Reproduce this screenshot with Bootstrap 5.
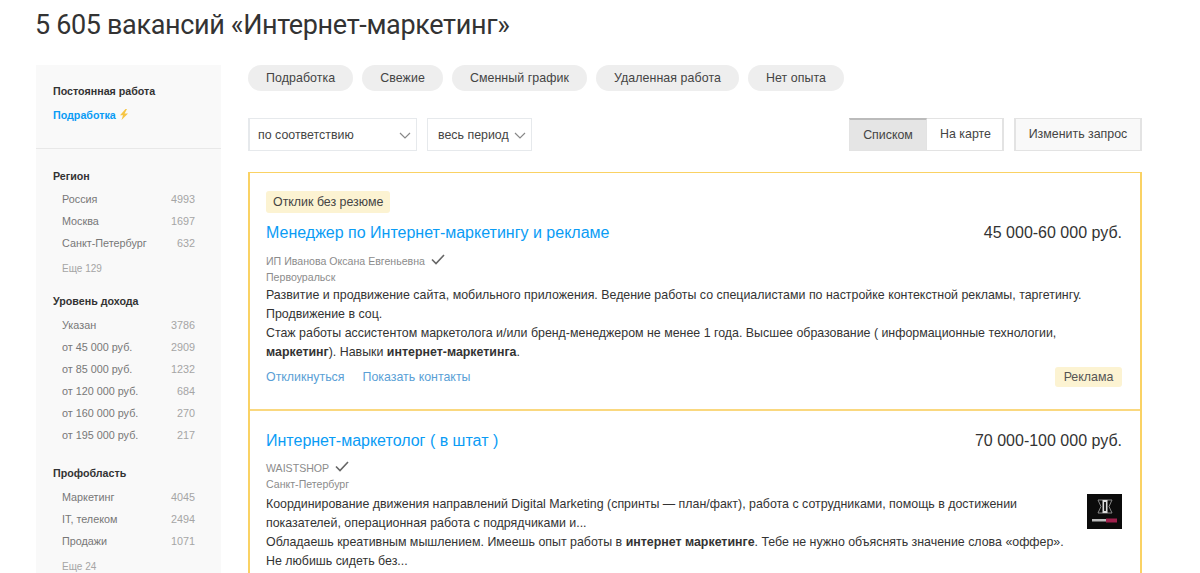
<!DOCTYPE html>
<html lang="ru">
<head>
  <meta charset="UTF-8" />
  <meta name="viewport" content="width=device-width, initial-scale=1.0"/>
  <title>Вакансии</title>
  <link href="https://cdn.jsdelivr.net/npm/bootstrap@5.3.0/dist/css/bootstrap.min.css" rel="stylesheet"/>
  <style>
    html, body { height: 573px; overflow: hidden; }
    body { font-family: "Liberation Sans", Arial, sans-serif; color: #333; background: #fff; }
    .page-wrap { padding: 0 58px 0 36px; }
    .page-title { font-family: Roboto, sans-serif; font-size: 27px; font-weight: 400; letter-spacing: -.35px; line-height: 36px; margin: 7px 0 22px -1px; color: #333; }
    .side-col { width: 185px; flex: none; background: #f9f9f9; padding-top: 19px; height: 520px; overflow: hidden; }
    .main-col { width: 894px; flex: none; margin-left: 27px; }
    .side-top { padding: 0 17px 26px; border-bottom: 1px solid #e8e8e8; margin-bottom: 20px; }
    .side-head { font-size: 10.7px; font-weight: 700; line-height: 14px; color: #333; margin-bottom: 6px; }
    .side-top .side-head { margin-bottom: 0; }
    .side-first .side-head { margin-bottom: 5px; }
    .side-link { font-size: 10.7px; font-weight: 700; color: #0a9cf5; line-height: 14px; margin-top: 10px; }
    .side-link svg { vertical-align: -1px; }
    .side-group { padding: 0 26px 0 17px; margin-bottom: 18px; }
    .side-wide { margin-bottom: 20px; }
    .side-row { font-size: 10.8px; line-height: 22px; color: #777; padding-left: 9px; }
    .side-row span:last-child { color: #a5a5a5; }
    .side-more { font-size: 10px; line-height: 14px; color: #a5a5a5; padding-left: 9px; margin-top: 8px; }
    .chip-item { background: #eee; border-radius: 13px; height: 26px; line-height: 26px; padding: 0 18px; font-size: 12.4px; letter-spacing: .07px; color: #444; }
    .chip-row { gap: 9px; }
    .tool-row { margin-top: 27px; margin-bottom: 21px; }
    .tool-box { height: 33px; border: 1px solid #e6e9ec; background: #fff; font-size: 12.4px; padding: 1px 5px 0 10px; color: #444; }
    .tool-sort { width: 169px; border-left-width: 2px; padding-left: 8px; }
    .tool-period { width: 105px; margin-left: 10px; }
    .view-btn { height: 33px; border: 1px solid #e3e3e3; background: #fff; font-size: 12.4px; color: #444; line-height: 31px; text-align: center; }
    .view-active { background: #e5e5e5; border-top: 2px solid #bbb; width: 78px; line-height: 30px; }
    .view-map { width: 77px; border-left: 0; border-right-width: 2px; padding-left: 2px; }
    .view-edit { width: 128px; margin-left: 10px; background: #f9f9f9; border-left-width: 2px; border-right-width: 2px; }
    .job-list { border: 2px solid #fad264; border-width: 1px 2px 1px 2px; }
    .job-item { padding: 18px 18px 22px 16px; }
    .job-item + .job-item { border-top: 2px solid #fad87f; padding-top: 20px; }
    .job-tag { background: #fcf3d2; border-radius: 3px; font-size: 12.4px; line-height: 22px; height: 22px; padding: 0 7px; display: inline-block; color: #444; margin-bottom: 10px; vertical-align: top; }
    .job-name { font-size: 16px; line-height: 20px; color: #0a9cf5; }
    .job-pay { font-size: 16px; line-height: 20px; color: #333; }
    .job-org { font-size: 10.6px; line-height: 14px; color: #8c8c8c; margin-top: 2px; }
    .job-head + .job-org { margin-top: 11px; }
    .job-item + .job-item .job-head + .job-org { margin-top: 10px; }
    .job-org svg { margin-left: 3px; vertical-align: 0; }
    .job-text { font-size: 12.4px; line-height: 19px; color: #333; margin-top: 2px; }
    .job-link { font-size: 12.4px; color: #5a9fd6; }
    .job-actions { gap: 18px; margin-top: 5px; }
    .job-ad { background: #fcf3d2; border-radius: 3px; font-size: 12.4px; line-height: 20px; width: 67px; text-align: center; color: #555; }
    .job-body { gap: 10px; margin-top: 2px; }
    .job-logo { width: 35px; height: 35px; flex: none; margin-top: 1px; }
  </style>
</head>
<body>
  <div class="page-wrap">
    <h1 class="page-title">5 605 вакансий «Интернет-маркетинг»</h1>
    <div class="d-flex">
      <div class="side-col">
        <div class="side-top">
          <div class="side-head">Постоянная работа</div>
          <div class="side-link">Подработка
            <svg width="10" height="11" viewBox="0 0 10 11"><path d="M6.500 0 1 6.200h3L2.500 11 9 4.400H5.600L8 0z" fill="#f6c544"/></svg>
          </div>
        </div>
        <div class="side-group side-first">
          <div class="side-head">Регион</div>
          <div class="side-row d-flex justify-content-between"><span>Россия</span><span>4993</span></div>
          <div class="side-row d-flex justify-content-between"><span>Москва</span><span>1697</span></div>
          <div class="side-row d-flex justify-content-between"><span>Санкт-Петербург</span><span>632</span></div>
          <div class="side-more">Еще 129</div>
        </div>
        <div class="side-group side-wide">
          <div class="side-head">Уровень дохода</div>
          <div class="side-row d-flex justify-content-between"><span>Указан</span><span>3786</span></div>
          <div class="side-row d-flex justify-content-between"><span>от 45 000 руб.</span><span>2909</span></div>
          <div class="side-row d-flex justify-content-between"><span>от 85 000 руб.</span><span>1232</span></div>
          <div class="side-row d-flex justify-content-between"><span>от 120 000 руб.</span><span>684</span></div>
          <div class="side-row d-flex justify-content-between"><span>от 160 000 руб.</span><span>270</span></div>
          <div class="side-row d-flex justify-content-between"><span>от 195 000 руб.</span><span>217</span></div>
        </div>
        <div class="side-group">
          <div class="side-head">Профобласть</div>
          <div class="side-row d-flex justify-content-between"><span>Маркетинг</span><span>4045</span></div>
          <div class="side-row d-flex justify-content-between"><span>IT, телеком</span><span>2494</span></div>
          <div class="side-row d-flex justify-content-between"><span>Продажи</span><span>1071</span></div>
          <div class="side-more">Еще 24</div>
        </div>
      </div>
      <div class="main-col">
        <div class="d-flex chip-row">
          <div class="chip-item">Подработка</div>
          <div class="chip-item">Свежие</div>
          <div class="chip-item">Сменный график</div>
          <div class="chip-item">Удаленная работа</div>
          <div class="chip-item">Нет опыта</div>
        </div>
        <div class="d-flex tool-row">
          <div class="tool-box tool-sort d-flex align-items-center justify-content-between">по соответствию
            <svg width="12" height="7" viewBox="0 0 12 7"><path d="M1 1l5 5 5-5" fill="none" stroke="#888" stroke-width="1.2"/></svg>
          </div>
          <div class="tool-box tool-period d-flex align-items-center justify-content-between">весь период
            <svg width="12" height="7" viewBox="0 0 12 7"><path d="M1 1l5 5 5-5" fill="none" stroke="#888" stroke-width="1.2"/></svg>
          </div>
          <div class="d-flex ms-auto">
            <div class="view-btn view-active">Списком</div>
            <div class="view-btn view-map">На карте</div>
            <div class="view-btn view-edit">Изменить запрос</div>
          </div>
        </div>
        <div class="job-list">
          <div class="job-item">
            <div class="job-tag">Отклик без резюме</div>
            <div class="d-flex justify-content-between job-head">
              <div class="job-name">Менеджер по Интернет-маркетингу и рекламе</div>
              <div class="job-pay">45 000-60 000 руб.</div>
            </div>
            <div class="job-org">ИП Иванова Оксана Евгеньевна
              <svg width="14" height="11" viewBox="0 0 14 11"><path d="M1 5.500l4 4 8-8.500" fill="none" stroke="#666" stroke-width="1.600"/></svg>
            </div>
            <div class="job-org">Первоуральск</div>
            <div class="job-text">Развитие и продвижение сайта, мобильного приложения. Ведение работы со специалистами по настройке контекстной рекламы, таргетингу. Продвижение в соц.<br>Стаж работы ассистентом маркетолога и/или бренд-менеджером не менее 1 года. Высшее образование ( информационные технологии, <b>маркетинг</b>). Навыки <b>интернет-маркетинга</b>.</div>
            <div class="d-flex align-items-center job-actions">
              <span class="job-link">Откликнуться</span>
              <span class="job-link">Показать контакты</span>
              <span class="job-ad ms-auto">Реклама</span>
            </div>
          </div>
          <div class="job-item">
            <div class="d-flex justify-content-between job-head">
              <div class="job-name">Интернет-маркетолог ( в штат )</div>
              <div class="job-pay">70 000-100 000 руб.</div>
            </div>
            <div class="job-org">WAISTSHOP
              <svg width="14" height="11" viewBox="0 0 14 11"><path d="M1 5.500l4 4 8-8.500" fill="none" stroke="#666" stroke-width="1.600"/></svg>
            </div>
            <div class="job-org">Санкт-Петербург</div>
            <div class="d-flex align-items-start job-body">
              <div class="job-text">Координирование движения направлений Digital Marketing (спринты — план/факт), работа с сотрудниками, помощь в достижении показателей, операционная работа с подрядчиками и...<br>Обладаешь креативным мышлением. Имеешь опыт работы в <b>интернет маркетинге</b>. Тебе не нужно объяснять значение слова «оффер». Не любишь сидеть без...</div>
              <svg class="job-logo" viewBox="0 0 35 35"><rect width="35" height="35" fill="#0b0b0b"/><path d="M11 6h14l-3 6.500 3 6.500H11l3-6.500z" fill="none" stroke="#8a8a8a"/><rect x="15.500" y="6" width="5" height="13" fill="#ddd"/><rect x="17" y="8" width="2" height="9" fill="#222"/><rect x="5" y="25" width="14" height="2.500" fill="#bbb"/><rect x="19" y="24.500" width="11" height="4" fill="#a0204c"/></svg>
            </div>
          </div>
        </div>
      </div>
    </div>
  </div>
  <script src="https://cdn.jsdelivr.net/npm/bootstrap@5.3.0/dist/js/bootstrap.bundle.min.js"></script>
</body>
</html>
